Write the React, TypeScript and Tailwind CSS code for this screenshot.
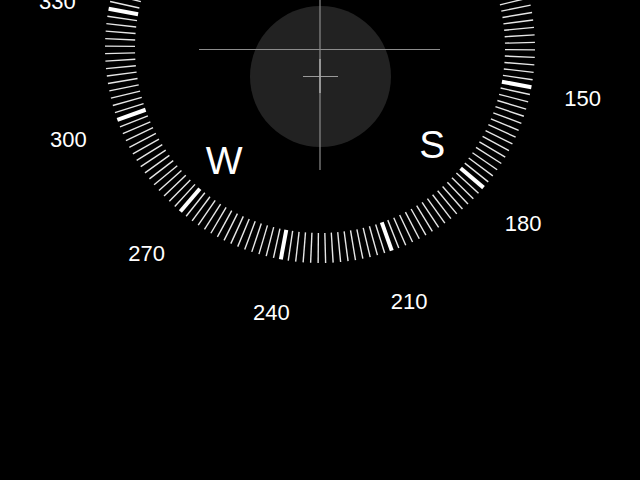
import React from "react";

const CX = 320;
const CY = 48;
const ROT = -49.5;

function pt(deg: number, r: number) {
  const t = ((deg + ROT) * Math.PI) / 180;
  return { x: CX + r * Math.sin(t), y: CY - r * Math.cos(t) };
}

export default function App() {
  const ticks = [];
  for (let b = 0; b < 360; b += 2) {
    const major = b % 30 === 0;
    const a = pt(b, 185);
    const c = pt(b, 215);
    ticks.push(
      <line
        key={b}
        x1={a.x}
        y1={a.y}
        x2={c.x}
        y2={c.y}
        stroke="#ffffff"
        strokeOpacity={major ? 1 : 0.9}
        strokeWidth={major ? 4 : 1.4}
      />
    );
  }
  const nums = [];
  for (let b = 0; b < 360; b += 30) {
    const p = pt(b, 267);
    nums.push(
      <text
        key={b}
        x={p.x}
        y={p.y + 9.5}
        textAnchor="middle"
        fill="#ffffff"
        fontSize={22}
        fontFamily="'Liberation Sans', Arial, sans-serif"
      >
        {b}
      </text>
    );
  }
  const letters: [number, string][] = [
    [0, "N"],
    [90, "E"],
    [180, "S"],
    [270, "W"],
  ];
  return (
    <div className="w-[640px] h-[480px] bg-black overflow-hidden">
      <svg width={640} height={480} viewBox="0 0 640 480" className="block">
        {ticks}
        {nums}
        {letters.map(([b, l]) => {
          const p = pt(b, 147.5);
          return (
            <text
              key={l}
              x={p.x}
              y={p.y + 14}
              textAnchor="middle"
              fill="#ffffff"
              fontSize={39}
              fontFamily="'Liberation Sans', Arial, sans-serif"
            >
              {l}
            </text>
          );
        })}
        <circle cx={320.5} cy={76.5} r={70.5} fill="#222222" />
        <line x1={199} y1={49.5} x2={440} y2={49.5} stroke="#8c8c8c" strokeWidth={1} />
        <line x1={320} y1={0} x2={320} y2={170} stroke="#8c8c8c" strokeWidth={1.2} />
        <line x1={303} y1={76.5} x2={338} y2={76.5} stroke="#9a9a9a" strokeWidth={1.2} />
        <line x1={320} y1={59} x2={320} y2={93} stroke="#a8a8a8" strokeWidth={1.5} />
      </svg>
    </div>
  );
}
